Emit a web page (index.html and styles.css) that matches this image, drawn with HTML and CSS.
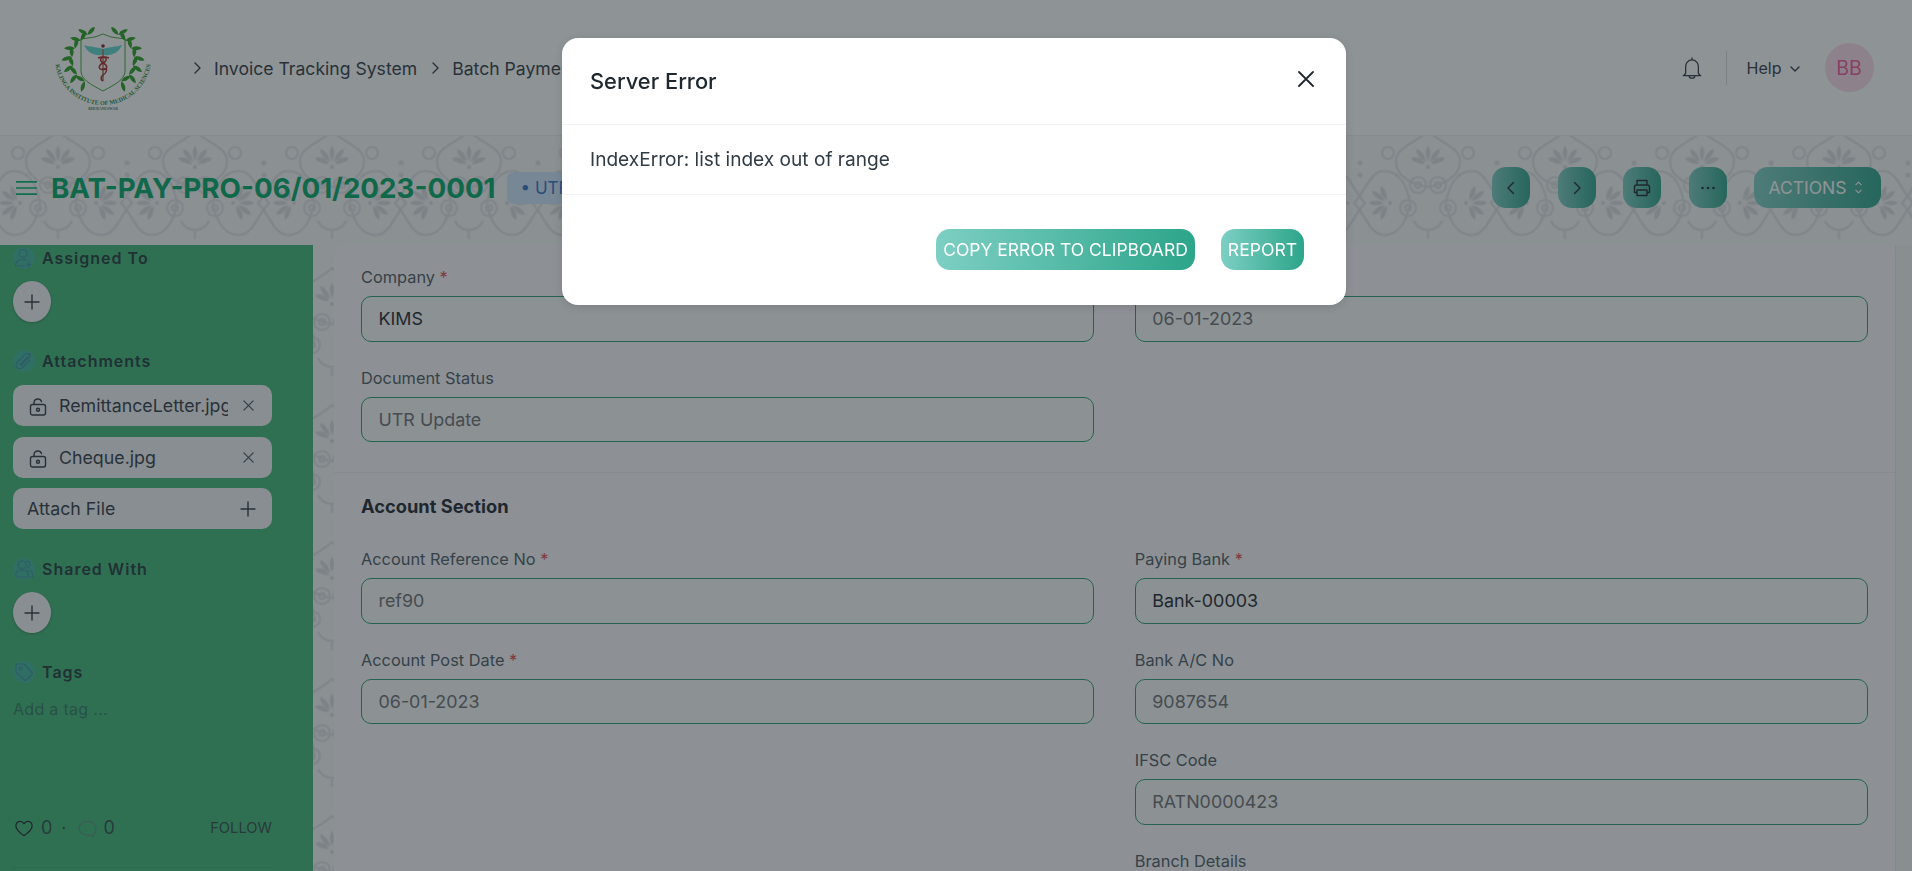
FILE: index.html
```html
<!DOCTYPE html>
<html lang="en">
<head>
<meta charset="utf-8">
<title>BAT-PAY-PRO-06/01/2023-0001</title>
<link rel="stylesheet" href="styles.css">
</head>
<body>
<header class="navbar">
  <svg class="logo" viewBox="0 0 99 85" width="99" height="85" aria-hidden="true">
    <defs>
      <g id="lf"><path d="M0 1C-4 -1 -6 -4 -6 -8C-2 -7 1 -3 0 1Z"/><path d="M0 1C3 -3 6 -4 10 -3C8 1 4 2 0 1Z"/></g>
      <path id="arc" d="M1 33A48 47 0 0 0 97 33"/>
    </defs>
    <g fill="#2a9e22">
      <g transform="translate(33 9) rotate(-25)"><use href="#lf"/></g>
      <g transform="translate(26 15) rotate(-40)"><use href="#lf"/></g>
      <g transform="translate(20 23) rotate(-55)"><use href="#lf"/></g>
      <g transform="translate(17 32) rotate(-72)"><use href="#lf"/></g>
      <g transform="translate(18 41) rotate(-90)"><use href="#lf"/></g>
      <g transform="translate(22 50) rotate(-108)"><use href="#lf"/></g>
      <g transform="translate(30 57) rotate(-128)"><use href="#lf"/></g>
      <g transform="translate(65 9) rotate(25) scale(-1 1)"><use href="#lf"/></g>
      <g transform="translate(72 15) rotate(40) scale(-1 1)"><use href="#lf"/></g>
      <g transform="translate(78 23) rotate(55) scale(-1 1)"><use href="#lf"/></g>
      <g transform="translate(81 32) rotate(72) scale(-1 1)"><use href="#lf"/></g>
      <g transform="translate(80 41) rotate(90) scale(-1 1)"><use href="#lf"/></g>
      <g transform="translate(76 50) rotate(108) scale(-1 1)"><use href="#lf"/></g>
      <g transform="translate(68 57) rotate(128) scale(-1 1)"><use href="#lf"/></g>
    </g>
    <path d="M27 14L41 12L49 9L57 12L71 14V46C71 55 60 60 49 66C38 60 27 55 27 46Z" fill="none" stroke="#2a9e22" stroke-width=".9"/>
    <path d="M49 24C44 22 36 22 30 20C33 27 39 31 49 30C59 31 65 27 68 20C62 22 54 22 49 24Z" fill="#5fd9cf"/>
    <circle cx="49" cy="21" r="1.800" fill="#7a2030"/>
    <path d="M49 24V56" stroke="#a97a5a" stroke-width="1.600"/>
    <path d="M44 33C52 30 55 35 49 38C43 41 45 46 50 44C54 42 53 48 49 50C46 52 47 55 49 56" fill="none" stroke="#a82a2a" stroke-width="1.500"/>
    <path d="M55 33C47 30 44 35 49 38C55 41 53 46 48 44" fill="none" stroke="#a82a2a" stroke-width="1.500"/>
    <text class="logo-text" text-anchor="middle"><textPath href="#arc" startOffset="50%">KALINGA INSTITUTE OF MEDICAL SCIENCES</textPath></text>
    <text class="logo-sub" x="49" y="84.500" text-anchor="middle">BHUBANESWAR</text>
  </svg>
  <nav class="crumbs">
    <svg class="ic chev" viewBox="0 0 16 16"><path d="M6 3l5 5-5 5"/></svg>
    <a class="crumb">Invoice Tracking System</a>
    <svg class="ic chev" viewBox="0 0 16 16"><path d="M6 3l5 5-5 5"/></svg>
    <a class="crumb">Batch Payment Process</a>
  </nav>
  <div class="nav-right">
    <svg class="ic bell" viewBox="0 0 22 24"><path d="M11 2.500V1M4 18V10.500C4 6.500 7 3 11 3S18 6.500 18 10.500V18L20.500 20.500H1.500ZM8 21C8 24 14 24 14 21"/></svg>
    <span class="nav-sep"></span>
    <span class="help">Help</span>
    <svg class="ic help-chev" viewBox="0 0 12 12"><path d="M2 4l4 4 4-4"/></svg>
    <span class="avatar">BB</span>
  </div>
</header>

<main class="page">
  <svg class="pattern" aria-hidden="true">
    <defs>
      <g id="petal-set">
        <path d="M0 -2C-3 -8 -3 -13 0 -17C3 -13 3 -8 0 -2Z"/>
        <path d="M-2 -1C-8 -4 -12 -9 -12 -14C-7 -13 -3 -8 -2 -1Z"/>
        <path d="M2 -1C8 -4 12 -9 12 -14C7 -13 3 -8 2 -1Z"/>
        <path d="M-3 1C-9 1 -15 -1 -17 -5C-11 -7 -5 -4 -3 1Z"/>
        <path d="M3 1C9 1 15 -1 17 -5C11 -7 5 -4 3 1Z"/>
        <circle cx="0" cy="4" r="2"/>
      </g>
      <g id="heart">
        <path class="pt-line" d="M0 24C-12 22 -32 16 -32 -2C-32 -16 -12 -20 0 -32C12 -20 32 -16 32 -2C32 16 12 22 0 24Z"/>
        <use href="#petal-set"/>
      </g>
      <g id="motif">
        <g transform="translate(0 -28)"><use href="#heart"/></g>
        <g transform="translate(-42 12) rotate(-90)"><use href="#heart"/></g>
        <g transform="translate(42 12) rotate(90)"><use href="#heart"/></g>
        <g class="pt-line">
          <circle cx="-10" cy="-6" r="8"/><circle cx="10" cy="-6" r="8"/>
          <circle cx="-10" cy="-6" r="3"/><circle cx="10" cy="-6" r="3"/>
          <circle cx="-20" cy="17" r="8"/><circle cx="20" cy="17" r="8"/>
          <circle cx="-20" cy="17" r="3"/><circle cx="20" cy="17" r="3"/>
          <circle cx="-40" cy="-38" r="6"/><circle cx="40" cy="-38" r="6"/>
          <path d="M-14 30C-8 42 8 42 14 30M0 38V48"/>
        </g>
        <circle cx="-68" cy="-28" r="2.500"/><circle cx="-68" cy="-16" r="2.500"/>
      </g>
      <pattern id="tile" patternUnits="userSpaceOnUse" x="-10.500" y="-13.500" width="137" height="137">
        <use href="#motif" x="68.500" y="68.500"/>
        <use href="#motif" x="205.500" y="68.500"/>
        <use href="#motif" x="-68.500" y="68.500"/>
        <use href="#motif" x="68.500" y="205.500"/>
        <use href="#motif" x="68.500" y="-68.500"/>
      </pattern>
    </defs>
    <rect class="pattern-fill" width="100%" height="100%"/>
  </svg>

  <section class="page-head">
    <svg class="ic burger" viewBox="0 0 22 16"><path d="M0 1.500H22M0 8H22M0 14.500H22"/></svg>
    <h1 class="title">BAT-PAY-PRO-06/01/2023-0001</h1>
    <span class="status-pill">• UTR Update</span>
    <div class="head-actions">
      <button class="grad-btn square"><svg class="ic" viewBox="0 0 16 16"><path d="M10.500 2.500L5 8l5.500 5.500"/></svg></button>
      <button class="grad-btn square"><svg class="ic" viewBox="0 0 16 16"><path d="M5.500 2.500L11 8l-5.500 5.500"/></svg></button>
      <button class="grad-btn square"><svg class="ic print" viewBox="0 0 20 20"><path d="M5 7V2.500H15V7M5 14.500H2.500V9C2.500 8 3.200 7 4.500 7H15.500C16.800 7 17.500 8 17.500 9V14.500H15M5 12H15V17.500H5Z"/></svg></button>
      <button class="grad-btn square"><svg class="more" viewBox="0 0 16 4" width="16" height="4"><circle cx="2.500" cy="2" r="1.300"/><circle cx="8" cy="2" r="1.300"/><circle cx="13.500" cy="2" r="1.300"/></svg></button>
      <button class="grad-btn actions">ACTIONS<svg class="ic updown" viewBox="0 0 10 16"><path d="M2 5l3-3 3 3M2 11l3 3 3-3"/></svg></button>
    </div>
  </section>

  <div class="page-body">
    <aside class="sidebar">
      <div class="side-label"><span class="side-ico"><svg class="ic" viewBox="0 0 20 20"><circle cx="9" cy="5.500" r="4"/><path d="M1.500 18C1.500 13.500 5 11.500 9 11.500C10.500 11.500 11.500 11.800 12.500 12.300M3 18H11M14.500 14.500V19M12.500 16.800H17"/></svg></span>Assigned To</div>
      <button class="round-add"><svg class="ic" viewBox="0 0 16 16"><path d="M8 1V15M1 8H15"/></svg></button>

      <div class="side-label spaced"><span class="side-ico"><svg class="ic" viewBox="0 0 20 20"><path d="M16.500 3.500C14.800 1.800 12.500 2 11 3.500L3.500 11C1.500 13 1.800 15.300 3 16.700C4.500 18.200 7 18 8.500 16.500L16 9M13.500 6L6.500 13C5.800 13.800 6.800 14.700 7.500 14L15.500 6C17.500 4 15.500 2.500 14 4"/></svg></span>Attachments</div>
      <div class="attach-list">
        <div class="attach-pill"><svg class="ic lock" viewBox="0 0 18 18"><rect x="1.500" y="6.500" width="15" height="10.500" rx="2"/><path d="M5 6.500V5C5 2.500 6.800 1 9 1C10.800 1 12 2 12.500 3.500"/><circle cx="9" cy="11.700" r="1.500"/></svg><span class="attach-name">RemittanceLetter.jpg</span><svg class="ic cross" viewBox="0 0 14 14"><path d="M2 2L12 12M12 2L2 12"/></svg></div>
        <div class="attach-pill"><svg class="ic lock" viewBox="0 0 18 18"><rect x="1.500" y="6.500" width="15" height="10.500" rx="2"/><path d="M5 6.500V5C5 2.500 6.800 1 9 1C10.800 1 12 2 12.500 3.500"/><circle cx="9" cy="11.700" r="1.500"/></svg><span class="attach-name">Cheque.jpg</span><svg class="ic cross" viewBox="0 0 14 14"><path d="M2 2L12 12M12 2L2 12"/></svg></div>
        <div class="attach-pill attach-file"><span class="attach-name">Attach File</span><svg class="ic plus" viewBox="0 0 16 16"><path d="M8 1V15M1 8H15"/></svg></div>
      </div>

      <div class="side-label spaced"><span class="side-ico"><svg class="ic" viewBox="0 0 20 20"><circle cx="8" cy="6" r="4"/><path d="M2 18C1 12.500 4 11 8 11S15 12.500 14 18ZM12 2.300C15 1.500 16.500 4 16 6C15.700 7.500 14.800 8.800 13 9.300M15 11.500C18 12 19 14 18.500 18H16"/></svg></span>Shared With</div>
      <button class="round-add"><svg class="ic" viewBox="0 0 16 16"><path d="M8 1V15M1 8H15"/></svg></button>

      <div class="side-label spaced"><span class="side-ico"><svg class="ic" viewBox="0 0 20 20"><path d="M2 3.500C2 2.700 2.700 2 3.500 2H10L18 10.500C18.500 11 18.500 11.800 18 12.300L12.300 18C11.800 18.500 11 18.500 10.500 18L2 10Z"/><circle cx="6.500" cy="6.500" r="1.500"/></svg></span>Tags</div>
      <div class="add-tag">Add a tag ...</div>

      <div class="side-stats">
        <svg class="ic heart" viewBox="0 0 20 18"><path d="M10 17C4 13 1 10 1 6C1 3 3.200 1 5.700 1C7.500 1 9 2 10 3.500C11 2 12.500 1 14.300 1C16.800 1 19 3 19 6C19 10 16 13 10 17Z"/></svg>
        <span class="stat">0</span><span class="stat dot">·</span>
        <svg class="ic bubble" viewBox="0 0 20 18"><path d="M16 15.500C18 14 19 12 19 9.500C19 5 15 1.500 10 1.500S1 5 1 9C1 13 5 16 10 16C12 16 14 16.500 16 17.500Z"/></svg>
        <span class="stat">0</span>
        <span class="follow">FOLLOW</span>
      </div>
      <hr class="side-rule">
    </aside>

    <div class="form-card">
      <section class="form-section">
        <div class="col">
          <div class="field"><label>Company <i>*</i></label><div class="input strong">KIMS</div></div>
          <div class="field"><label>Document Status</label><div class="input">UTR Update</div></div>
        </div>
        <div class="col">
          <div class="field"><label>Date <i>*</i></label><div class="input">06-01-2023</div></div>
        </div>
      </section>
      <section class="form-section titled">
        <h2 class="section-title">Account Section</h2>
        <div class="col">
          <div class="field"><label>Account Reference No <i>*</i></label><div class="input">ref90</div></div>
          <div class="field"><label>Account Post Date <i>*</i></label><div class="input">06-01-2023</div></div>
        </div>
        <div class="col">
          <div class="field"><label>Paying Bank <i>*</i></label><div class="input strong">Bank-00003</div></div>
          <div class="field"><label>Bank A/C No</label><div class="input">9087654</div></div>
          <div class="field"><label>IFSC Code</label><div class="input">RATN0000423</div></div>
          <div class="field"><label>Branch Details</label><div class="input"></div></div>
        </div>
      </section>
    </div>
    <div class="track"></div>
  </div>
</main>

<div class="backdrop">
  <div class="modal">
    <div class="modal-head">
      <h3 class="modal-title">Server Error</h3>
      <svg class="ic modal-close" viewBox="0 0 18 18"><path d="M2 2L16 16M16 2L2 16"/></svg>
    </div>
    <div class="modal-body">IndexError: list index out of range</div>
    <div class="modal-foot">
      <button class="grad-btn wide">COPY ERROR TO CLIPBOARD</button>
      <button class="grad-btn report">REPORT</button>
    </div>
  </div>
</div>
</body>
</html>
```
FILE: styles.css
```css
* { box-sizing: border-box; }
html, body { margin: 0; height: 100%; }
body {
  font-family: Inter, "Noto Sans", sans-serif;
  color: #313b44;
  background: #fff;
  overflow: hidden;
  display: flex;
  flex-direction: column;
}
.ic { fill: none; stroke: currentColor; stroke-width: 1.4; stroke-linecap: round; stroke-linejoin: round; flex: none; }

/* navbar */
.navbar {
  height: 136px;
  flex: none;
  display: flex;
  align-items: center;
  padding: 0 38.500px 0 54px;
  background: #fdfefe;
  border-bottom: 1px solid #eceef0;
}
.logo { flex: none; margin-top: -1px; }
.logo-text { font: bold 6.100px "Liberation Serif", serif; fill: #2a8a30; }
.logo-sub { font: bold 3.800px "Liberation Serif", serif; fill: #4a7a60; }
.crumbs { display: flex; align-items: center; margin-left: 36px; margin-top: 1px; }
.crumb { font-size: 17.600px; color: #313b44; white-space: nowrap; }
.chev { width: 16px; height: 16px; margin-right: 9px; }
.crumb + .chev { margin-left: 10px; margin-right: 9px; }
.nav-right { margin-left: auto; display: flex; align-items: center; }
.bell { width: 20px; height: 24px; margin-right: 24px; }
.nav-sep { width: 1px; height: 34px; background: #d5d8dc; margin-right: 20px; }
.help { font-size: 16px; }
.help-chev { width: 12px; height: 12px; margin-left: 7px; margin-right: 24px; margin-top: 3px; }
.avatar {
  width: 49px; height: 49px; border-radius: 50%;
  background: #fbdde8; color: #f05a9a;
  display: flex; align-items: center; justify-content: center;
  font-size: 19.500px;
}

/* page */
.page { flex: 1; min-height: 0; position: relative; display: flex; flex-direction: column; background: #f7f8f9; overflow: hidden; }
.pattern { position: absolute; left: 0; top: 0; width: 100%; height: 100%; }
.pattern-fill { fill: url(#tile); }
#motif { fill: #dde0e3; }
#petal-set { fill: #dadde0; }
.pt-line { fill: none; stroke: #e0e2e5; stroke-width: 2.200; }
.page-head {
  position: relative;
  height: 109px;
  flex: none;
  display: flex;
  align-items: center;
  padding: 0 31px 6px 16px;
}
.burger { width: 21px; height: 16px; stroke: #00b56d; stroke-width: 1.800; margin-right: 14px; }
.title { margin: 0; font-size: 27.750px; line-height: 36px; font-weight: 700; color: #00a866; white-space: nowrap; }
.status-pill {
  margin-left: 11px; height: 32px; padding: 0 14px;
  background: #cfe7ff; color: #2f72c8; border-radius: 7px;
  display: flex; align-items: center; font-size: 17px; white-space: nowrap;
}
.head-actions { margin-left: auto; display: flex; gap: 27.500px; }
.grad-btn {
  border: 0; height: 41px; border-radius: 14px;
  background: linear-gradient(90deg, #7dcfc3 0%, #2ca58a 100%);
  color: #fff; font-family: inherit; display: flex; align-items: center; justify-content: center;
  padding: 0; white-space: nowrap; font-size: 17.600px;
}
.square { width: 38px; color: #1f272e; }
.square .ic { width: 16px; height: 16px; }
.square .print { width: 20px; height: 20px; }
.more { fill: #1f272e; }
.actions { width: 127px; font-size: 17.500px; gap: 7px; padding-right: 4px; }
.updown { width: 9px; height: 15px; stroke-width: 1.200; }

.page-body { position: relative; flex: 1; min-height: 0; display: flex; }

/* sidebar */
.sidebar {
  width: 313px; flex: none;
  margin-right: 21px;
  padding: 0 41px 0 13px;
  background: #41b976;
  display: flex; flex-direction: column;
}
.side-label {
  height: 26px; display: flex; align-items: center;
  font-size: 16px; font-weight: 600; letter-spacing: 1px; color: #1f3a3d;
  flex: none;
}
.side-label.spaced { margin-top: 26px; }
.side-ico {
  width: 22px; height: 22px; border-radius: 50%; background: #3fb79b;
  display: flex; align-items: center; justify-content: center;
  margin-right: 7px; color: #3f8fa0;
}
.side-ico .ic { width: 20px; height: 20px; stroke-width: 1.100; }
.round-add {
  width: 38px; height: 41px; border-radius: 50%; border: 0; padding: 0; margin-top: 10px;
  background: #f3f5f7; color: #313b44; flex: none;
  display: flex; align-items: center; justify-content: center;
  box-shadow: 0 1px 3px rgba(0, 0, 0, .25);
}
.round-add .ic { width: 16px; height: 16px; }
.attach-list { margin: 11px 0 1px; display: flex; flex-direction: column; gap: 10.500px; }
.attach-pill {
  height: 41px; flex: none; border-radius: 10px; background: #f3f5f7;
  display: flex; align-items: center; padding: 0 17.500px 0 16px;
  font-size: 17.800px; color: #313b44;
}
.attach-name { flex: 1; overflow: hidden; white-space: nowrap; min-width: 0; }
.lock { width: 18px; height: 18px; margin-right: 12px; margin-top: 3px; }
.cross { width: 13px; height: 13px; margin-left: 13.500px; color: #4d5a66; }
.attach-file { padding-left: 14px; }
.plus { width: 16px; height: 16px; margin-right: -1.500px; }
.add-tag { margin-top: 14px; font-size: 16px; line-height: 20px; color: #2f7a63; letter-spacing: .3px; }
.side-stats { margin-top: auto; padding-left: 2px; display: flex; align-items: center; font-size: 18px; color: #2f4c4a; }
.heart { width: 18px; height: 17px; margin-right: 8px; margin-top: 2px; color: #1f272e; }
.stat { color: #2f4c4a; }
.dot { margin: 0 11px 0 9px; }
.bubble { width: 19px; height: 17px; margin-right: 7px; margin-top: 2px; color: #54917c; }
.follow { margin-left: auto; font-size: 14.700px; }
.side-rule { width: 100%; border: 0; border-top: 1px solid #3dab70; margin: 29px 0 3px; }

/* form */
.form-card {
  flex: 1; min-width: 0;
  background: #fafbfc;
  border-top-left-radius: 10px;
  border-top-right-radius: 10px;
  overflow: hidden;
}
.form-section {
  display: grid; grid-template-columns: 1fr 1fr; column-gap: 41px;
  padding: 22px 27.500px 4px 27px;
}
.form-section.titled { border-top: 1px solid #eceef0; padding-top: 20px; }
.section-title {
  grid-column: 1 / -1; margin: 0 0 30px;
  font-size: 18.300px; line-height: 26px; font-weight: 700; color: #1f272e;
}
.field { margin-bottom: 26px; }
.field label { display: block; font-size: 16.350px; line-height: 20px; margin-bottom: 9px; color: #4c5a63; }
.field i { font-style: normal; color: #e24c4c; }
.input {
  height: 45.500px; border: 1px solid #289f70; border-radius: 10px;
  background: #f8fafa; display: flex; align-items: center; padding: 0 16.500px;
  font-size: 17.900px; color: #6d7073;
}
.input.strong { color: #1f272e; }
.track { width: 17px; flex: none; background: #f3f5f5; border-left: 1px solid #e7e9ea; }

/* modal */
.backdrop {
  position: fixed; inset: 0;
  background: rgba(31, 39, 46, .5);
  display: flex; justify-content: center; align-items: flex-start;
  padding: 38px 4px 0 0;
}
.modal {
  width: 784px; height: 267px; background: #fff; border-radius: 16px;
  display: flex; flex-direction: column;
  box-shadow: 0 2px 8px rgba(0, 0, 0, .12);
}
.modal-head {
  height: 87px; flex: none; display: flex; align-items: center; justify-content: space-between;
  padding: 0 31px 0 28px; border-bottom: 1px solid #f2f3f4;
}
.modal-title { margin: -1px 0 0; font-size: 21.850px; font-weight: 500; color: #1f272e; }
.modal-close { width: 18px; height: 18px; color: #1f272e; stroke-width: 1.800; margin-top: -5px; }
.modal-body {
  height: 70px; flex: none; display: flex; align-items: center;
  padding: 0 28px 2px; font-size: 19.100px; color: #313b44; border-bottom: 1px solid #f2f3f4;
}
.modal-foot { display: flex; justify-content: flex-end; gap: 26px; padding: 34px 42px 0 0; }
.wide { width: 259px; font-size: 17.500px; }
.report { width: 83px; }
```
